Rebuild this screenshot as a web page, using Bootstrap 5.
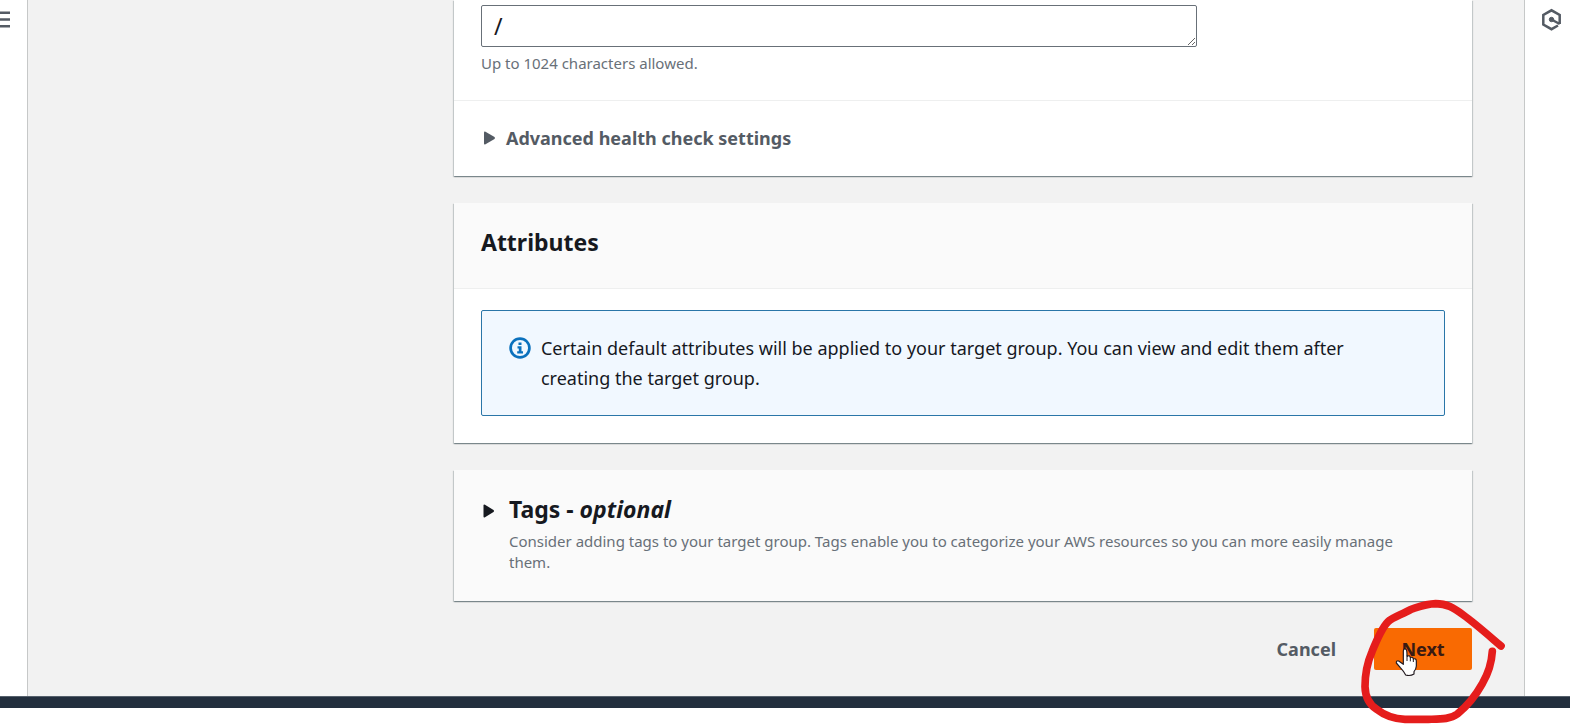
<!DOCTYPE html>
<html lang="en">
<head>
<meta charset="utf-8">
<meta name="viewport" content="width=device-width, initial-scale=1">
<title>Create target group</title>
<link rel="stylesheet" href="https://cdn.jsdelivr.net/npm/bootstrap@5.3.0/dist/css/bootstrap.min.css">
<style>
  body { font-family: "Noto Sans", "Open Sans", sans-serif; font-size: 18px; line-height: 30px; color: #16191f; background: #fff; }
  .rail { flex: none; }
  .rail-start { width: 28px; border-right: 1px solid #c6c8c8; }
  .rail-end { width: 46px; border-left: 1px solid #c6c8c8; }
  .rail button { border: 0; background: none; padding: 0; display: block; }
  .workspace { background: #f2f2f2; padding-right: 52px; }
  .steps { flex: 0 0 29.5%; }
  .panel { background: #fff; margin-bottom: 27px; box-shadow: 0 1px 1px 0 rgba(0,28,36,.3), 1px 1px 1px 0 rgba(0,28,36,.15), -1px 1px 1px 0 rgba(0,28,36,.15); }
  .panel-head { background: #fafafa; padding: 24px 27px 30px; border-bottom: 1px solid #eeefef; }
  .panel h2 { font-size: 23px; line-height: 31px; font-weight: 700; margin: 0; }
  .path-field { padding: 5px 27px 26px; }
  .path-field textarea { display: block; width: 716px; max-width: 100%; height: 42px; padding: 5px 12px; border: 1px solid #687078; border-radius: 2px; font-size: 23px; line-height: 30px; color: #16191f; overflow: hidden; }
  .hint { font-size: 15px; line-height: 21px; color: #687078; }
  .path-field .hint { padding-top: 6px; }
  .advanced { border-top: 1px solid #eeefef; padding: 22px 27px 23px; }
  .advanced button { border: 0; background: none; padding: 0; font-weight: 700; color: #545b64; gap: 9px; }
  .notice { margin: 21px 27px 27px; padding: 22px 60px 22px 27px; border: 1px solid #2a76a8; border-radius: 2px; background: #f1f8ff; gap: 10px; }
  .notice svg { margin-top: 4px; }
  .tags { background: #fafafa; padding: 24px 54px 28px 27px; gap: 14px; }
  .tags .hint { padding-top: 6px; }
  .tags button { border: 0; background: none; padding: 0; height: 33px; color: #16191f; }
  .actions { gap: 38px; padding-bottom: 25px; }
  .act { font-size: 18px; line-height: 24px; font-weight: 700; padding: 9px 0; border: 0; border-radius: 2px; height: 42px; }
  .act-cancel { background: none; color: #545b64; }
  .act-next { background: #f96a02; color: #3a1a12; width: 98px; }
  .scribble { left: -34px; top: -38px; pointer-events: none; }
  .base-bar { height: 12px; background: #232f3e; border-top: 1px solid #55606c; margin-bottom: 17px; }
</style>
<script src="https://cdn.jsdelivr.net/npm/bootstrap@5.3.0/dist/js/bootstrap.bundle.min.js"></script>
</head>
<body class="d-flex flex-column min-vh-100">
<div class="d-flex flex-grow-1">
  <nav class="rail rail-start">
    <button type="button" aria-label="Open navigation"><svg class="d-block" width="10" height="30" viewBox="0 0 10 30" stroke="#545b64" stroke-width="2.500"><path d="M0 12.700h10M0 19.500h10M0 26.300h10"/></svg></button>
  </nav>
  <main class="workspace d-flex flex-grow-1">
    <div class="steps"></div>
    <form class="flex-grow-1">
      <section class="panel">
        <div class="path-field">
          <textarea rows="1" aria-label="Health check path" aria-describedby="pathHint">/</textarea>
          <div class="hint" id="pathHint">Up to 1024 characters allowed.</div>
        </div>
        <div class="advanced">
          <button type="button" class="d-flex align-items-center"><svg width="16" height="16" viewBox="0 0 16 16" fill="#545b64"><path d="M3 2.500Q3 1 4.500 1.700L13.500 7Q14.500 8 13.500 9L4.500 14.300Q3 15 3 13.500Z"/></svg>Advanced health check settings</button>
        </div>
      </section>
      <section class="panel">
        <div class="panel-head"><h2>Attributes</h2></div>
        <div class="d-flex">
          <div class="notice d-flex flex-grow-1">
            <svg class="flex-shrink-0" width="22" height="22" viewBox="0 0 22 22"><circle cx="11" cy="11" r="9.400" fill="none" stroke="#0b71bd" stroke-width="2.700"/><path fill="#0b71bd" d="M9.500 5.500h3v2.500h-3zM8.500 9.200h4v5h1.500v2.200H8.200v-2.200h1.600v-2.800H8.500z"/></svg>
            <div>Certain default attributes will be applied to your target group. You can view and edit them after creating the target group.</div>
          </div>
        </div>
      </section>
      <section class="panel tags d-flex">
        <button type="button" class="flex-shrink-0" aria-label="Expand tags"><svg class="d-block" width="14" height="16" viewBox="0 0 14 16" fill="#16191f"><path d="M2.500 2.500Q2.500 1 4 1.700L12.500 7Q13.500 8 12.500 9L4 14.300Q2.500 15 2.500 13.500Z"/></svg></button>
        <div>
          <h2>Tags - <em>optional</em></h2>
          <div class="hint">Consider adding tags to your target group. Tags enable you to categorize your AWS resources so you can more easily manage them.</div>
        </div>
      </section>
      <div class="actions d-flex justify-content-end">
        <button type="button" class="act act-cancel">Cancel</button>
        <div class="position-relative">
          <button type="submit" class="act act-next d-block">Next</button>
          <svg class="scribble position-absolute" width="230" height="135" viewBox="0 0 690 405">
            <path d="M190 183Q191 174 198 178Q201 180 201 196L202 199Q209 194 211 203Q218 199 220 207Q229 204 229 214V228Q228 239 222 245V252Q211 259 197 255Q192 245 181 233L169 219Q168 211 176 213L190 223Z" fill="#fff" stroke="#221a20" stroke-width="3.500" stroke-linejoin="round"/>
            <path d="M201 196V213M211 203V214M220 207V216" stroke="#221a20" stroke-width="3"/>
            <path d="M483 168C442 133 405 100 370 75C340 53 320 41 287 41C257 42 235 51 213 58C185 74 157 82 144 95C125 114 110 150 96 185C79 224 75 260 75 290C76 325 90 345 110 358C134 377 163 387 195 388H265C302 387 330 388 352 372C382 348 407 317 427 281C447 247 455 217 457 184" fill="none" stroke="#e51d1c" stroke-width="23" stroke-linecap="round" stroke-linejoin="round"/>
          </svg>
        </div>
      </div>
    </form>
  </main>
  <aside class="rail rail-end">
    <button type="button" class="ms-3" aria-label="Open help"><svg class="d-block" width="22" height="32" viewBox="0 0 22 32" fill="none" stroke="#545b64" stroke-width="2.500"><path d="M18.700 24V15L10.500 10.300L2.300 15V24.500L10.500 29.200L17 25.500M10.500 19.500L18.700 24"/><circle cx="10.500" cy="19.500" r="2.200" fill="#545b64" stroke-width="1"/></svg></button>
  </aside>
</div>
<footer class="base-bar"></footer>
</body>
</html>
